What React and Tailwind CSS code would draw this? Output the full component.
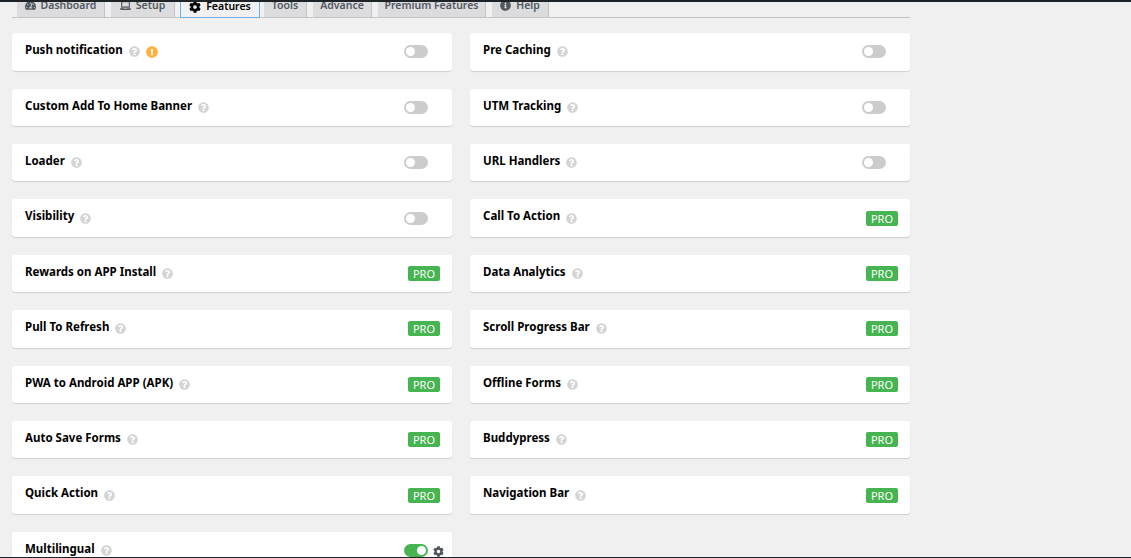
import React from 'react'
import { FaTachometerAlt, FaCog, FaInfoCircle, FaQuestionCircle, FaExclamationCircle, FaLaptop } from 'react-icons/fa'

const tabs = [
  { label: 'Dashboard', icon: FaTachometerAlt, w: 'w-[88px]' },
  { label: 'Setup', icon: FaLaptop, w: 'w-[64px]' },
  { label: 'Features', icon: FaCog, w: 'w-[80px]', active: true },
  { label: 'Tools', w: 'w-[43px]' },
  { label: 'Advance', w: 'w-[59px]' },
  { label: 'Premium Features', w: 'w-[108px]' },
  { label: 'Help', icon: FaInfoCircle, w: 'w-[57px]' },
]

const left = [
  { label: 'Push notification', warn: true },
  { label: 'Custom Add To Home Banner' },
  { label: 'Loader' },
  { label: 'Visibility' },
  { label: 'Rewards on APP Install', pro: true },
  { label: 'Pull To Refresh', pro: true },
  { label: 'PWA to Android APP (APK)', pro: true },
  { label: 'Auto Save Forms', pro: true },
  { label: 'Quick Action', pro: true },
  { label: 'Multilingual', on: true },
]

const right = [
  { label: 'Pre Caching' },
  { label: 'UTM Tracking' },
  { label: 'URL Handlers' },
  { label: 'Call To Action', pro: true },
  { label: 'Data Analytics', pro: true },
  { label: 'Scroll Progress Bar', pro: true },
  { label: 'Offline Forms', pro: true },
  { label: 'Buddypress', pro: true },
  { label: 'Navigation Bar', pro: true },
]

function Toggle({ on }) {
  return (
    <span className={`flex h-[13px] w-6 items-center rounded-full px-[2px] ${on ? 'justify-end bg-[#46b450]' : 'bg-[#ccc]'}`}>
      <span className="h-[9px] w-[9px] rounded-full bg-white" />
    </span>
  )
}

function FeatureCard({ item }) {
  return (
    <div className="flex h-[37.4px] w-[440px] items-center justify-between rounded-[3px] bg-white pl-[13px] pr-3 shadow-[0_1px_1px_rgba(0,0,0,0.14)]">
      <div className="flex items-center">
        <span className="relative top-[-2px] text-[11.5px] font-bold text-black">{item.label}</span>
        <FaQuestionCircle className="ml-[6px] text-[11px] text-[#d4d4d4]" />
        {item.warn && <FaExclamationCircle className="ml-[6px] text-[12px] text-[#ffb13c]" />}
      </div>
      {item.pro && (
        <span className="rounded-[2px] bg-[#46b450] px-[5px] text-[11px] leading-[15px] text-white">PRO</span>
      )}
      {!item.pro && (
        <div className={`flex items-center ${item.on ? 'mr-[-4px]' : 'mr-3'}`}>
          <Toggle on={item.on} />
          {item.on && <FaCog className="ml-[5px] mt-[2px] text-[11px] text-[#50575e]" />}
        </div>
      )}
    </div>
  )
}

export default function App() {
  return (
    <div className="h-[558px] w-[1131px] overflow-hidden bg-[#f0f0f0] font-['Noto_Sans','Open_Sans',sans-serif]">
      <div className="relative z-10 h-[2px] bg-[#1d2327]" />
      <div className="mx-3 flex h-4 w-[898px] items-end gap-[6px] border-b border-[#c3c4c7] pl-[5px]">
        {tabs.map(t => (
          <div
            key={t.label}
            className={`flex h-5 shrink-0 items-center justify-center gap-[5px] pb-[3px] text-[10.5px] font-semibold ${t.w} ${
              t.active
                ? 'relative top-px -ml-px -mr-[2px] border border-[#72aee6] bg-[#f0f0f0] text-black'
                : 'border-r border-[#c3c4c7] bg-[#dcdcde] text-[#50575e]'
            }`}
          >
            {t.icon && <t.icon className={t.active ? 'text-[12px]' : 'text-[11px]'} />}
            {t.label}
          </div>
        ))}
      </div>
      <div className="ml-3 mt-[15.2px] flex gap-[18px]">
        <div className="flex flex-col gap-[18px]">
          {left.map(item => <FeatureCard key={item.label} item={item} />)}
        </div>
        <div className="flex flex-col gap-[18px]">
          {right.map(item => <FeatureCard key={item.label} item={item} />)}
        </div>
      </div>
      <div className="fixed bottom-0 left-0 h-px w-full bg-[#1d2327]" />
    </div>
  )
}
